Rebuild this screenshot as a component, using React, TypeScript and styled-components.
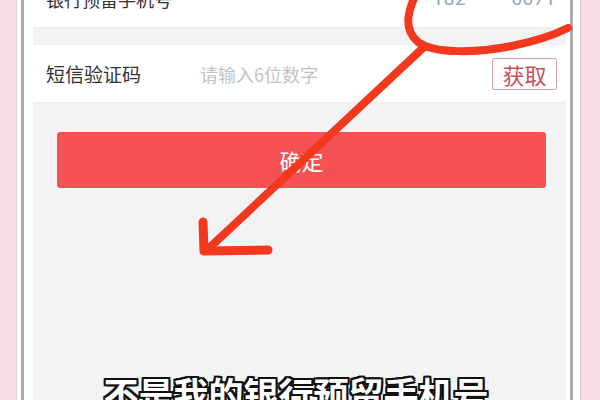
import styled, { createGlobalStyle } from 'styled-components'

const GlobalStyle = createGlobalStyle`
  html, body {
    margin: 0;
    padding: 0;
    overflow: hidden;
    background: #fadce6;
  }
  body {
    font-family: 'Noto Sans CJK SC', 'Noto Sans', sans-serif;
  }
`

const App = () => {
  return (
    <>
      <GlobalStyle />
      <Page>
        <Bezel>
          <Inner>
            <Screen>
              <TopRow>
                <Label size={18}>银行预留手机号</Label>
                <Phone>182 **** 6071</Phone>
              </TopRow>
              <Gap />
              <Row>
                <Label size={19}>短信验证码</Label>
                <Placeholder>请输入6位数字</Placeholder>
                <CodeButton>获取</CodeButton>
              </Row>
              <Confirm>确定</Confirm>
            </Screen>
          </Inner>
        </Bezel>
        <Marks width="600" height="400" viewBox="0 0 600 400">
          <path
            d="M 415 -4 C 407 14, 404 30, 418 42 C 434 54, 476 53, 512 46 C 536 41, 554 35, 568 28"
            fill="none"
            stroke="#f2391e"
            strokeWidth="8"
            strokeLinecap="round"
          />
          <path
            d="M 424 47 L 207 250"
            fill="none"
            stroke="#f2391e"
            strokeWidth="8"
            strokeLinecap="round"
          />
          <path
            d="M 203 222 L 204 251 L 268 250"
            fill="none"
            stroke="#f2391e"
            strokeWidth="9"
            strokeLinecap="round"
            strokeLinejoin="round"
          />
        </Marks>
        <Caption>不是我的银行预留手机号</Caption>
      </Page>
    </>
  )
}

export default App

const Page = styled.div`
  position: relative;
  display: flex;
  height: 400px;
  padding: 0 19px 0 16px;
  background: #fadce6;
  overflow: hidden;
`

const Bezel = styled.div`
  flex: 1;
  display: flex;
  background: #ffffff;
  border-left: 1px solid #e2d2d8;
  border-right: 1px solid #d9c9cf;
  padding: 0 7px 0 4px;
`

const Inner = styled.div`
  flex: 1;
  display: flex;
  background: #ffffff;
  border-left: 3px solid #acacac;
  border-right: 3px solid #acacac;
  padding: 0 4px 0 9px;
`

const Screen = styled.div`
  flex: 1;
  display: flex;
  flex-direction: column;
  background: #f3f3f3;
`

const TopRow = styled.div`
  display: flex;
  align-items: center;
  justify-content: space-between;
  height: 58px;
  margin-top: -30px;
  padding: 0 10px 0 13px;
  background: #ffffff;
  border-bottom: 1px solid #ececec;
  box-sizing: border-box;
`

const Gap = styled.div`
  height: 17px;
`

const Row = styled.div`
  display: flex;
  align-items: center;
  height: 58px;
  padding: 0 9px 0 13px;
  background: #ffffff;
  border-bottom: 1px solid #ececec;
  box-sizing: border-box;
`

const Label = styled.span<{ size: number }>`
  width: 154px;
  font-size: ${(p) => p.size}px;
  line-height: 1;
  color: #333333;
  white-space: nowrap;
`

const Phone = styled.span`
  font-family: 'Roboto', 'Noto Sans', sans-serif;
  font-size: 19px;
  line-height: 1;
  color: #8ea6c1;
  letter-spacing: 0.5px;
`

const Placeholder = styled.span`
  flex: 1;
  font-size: 18px;
  line-height: 1;
  color: #c3c3c3;
`

const CodeButton = styled.button`
  width: 65px;
  height: 32px;
  padding: 0;
  border: 1px solid #d9a4a9;
  border-radius: 2px;
  background: #ffffff;
  font-family: 'Noto Sans CJK SC', sans-serif;
  font-size: 22px;
  line-height: 1;
  color: #c7525d;
`

const Confirm = styled.button`
  height: 56px;
  margin: 29px 20px 0 24px;
  border: none;
  border-radius: 3px;
  background: #f65154;
  font-family: 'Noto Sans CJK SC', sans-serif;
  font-size: 22px;
  color: #ffffff;
`

const Marks = styled.svg`
  position: absolute;
  left: 0;
  top: 0;
  pointer-events: none;
`

const Caption = styled.div`
  position: absolute;
  left: 0;
  right: 0;
  top: 375px;
  text-align: center;
  padding-right: 8px;
  font-size: 35px;
  font-weight: 700;
  line-height: 1;
  color: #ffffff;
  white-space: nowrap;
  text-shadow:
    -2px -2px 0 #111, 2px -2px 0 #111, -2px 2px 0 #111, 2px 2px 0 #111,
    0 -2px 0 #111, 0 2px 0 #111, -2px 0 0 #111, 2px 0 0 #111;
`
